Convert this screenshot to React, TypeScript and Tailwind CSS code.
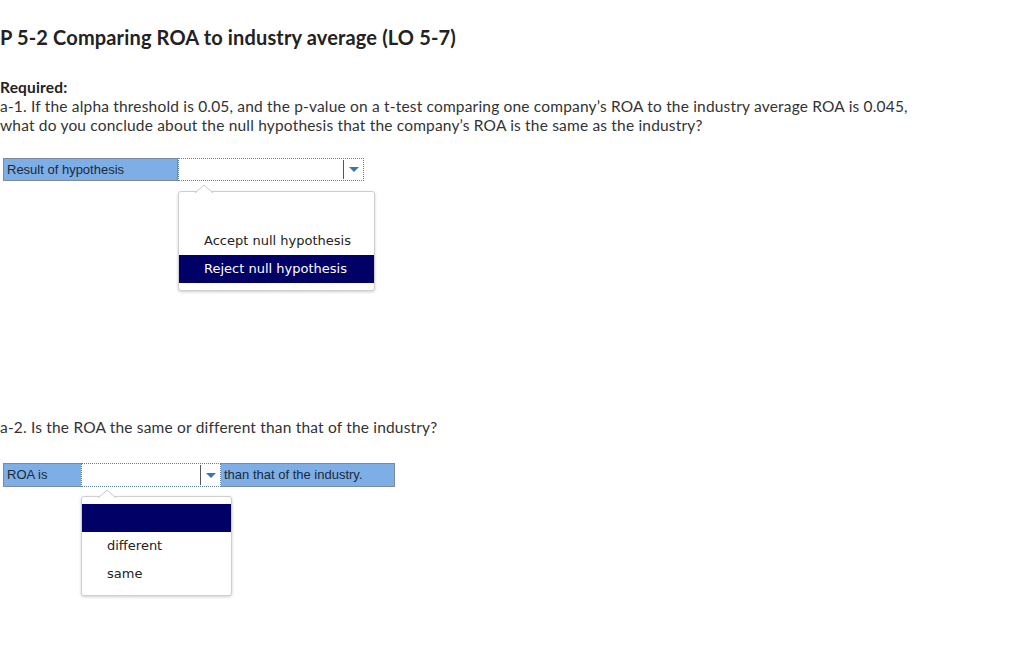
import React from "react";

const body = { fontFamily: "Lato, 'Open Sans', sans-serif" };
const label = { fontFamily: "'Liberation Sans', Arial, sans-serif" };

function Arrow() {
  return (
    <div className="my-[1px] flex w-[20px] items-center justify-center border-l border-[#555]">
      <svg width="10" height="5" viewBox="0 0 10 5">
        <polygon points="0,0 10,0 5,5" fill="#3d72b4" />
      </svg>
    </div>
  );
}

function Pointer() {
  return (
    <svg className="absolute left-[16px] top-[-7px]" width="18" height="8" viewBox="0 0 18 8">
      <polygon points="0,8 9,0 18,8" fill="#fff" />
      <polyline points="0,8 9,0 18,8" fill="none" stroke="#c8c8c8" strokeWidth="1" />
    </svg>
  );
}

function Menu({ items, selected, width }: { items: string[]; selected: number; width: string }) {
  return (
    <div
      className={`absolute left-[-1px] top-[32px] z-10 rounded-[3px] border border-[#cfcfcf] bg-white py-[7px] shadow-[0_1px_3px_rgba(0,0,0,0.2)] ${width}`}
      style={{ fontFamily: "'DejaVu Sans', Verdana, sans-serif" }}
    >
      <Pointer />
      {items.map((it, i) => (
        <div
          key={i}
          className={`flex h-[28px] items-center pl-[25px] text-[13px] ${
            i === selected ? "bg-[#000066] text-white" : "text-[#222]"
          }`}
        >
          {it}
        </div>
      ))}
    </div>
  );
}

export default function App() {
  return (
    <div className="min-h-[650px] w-[1019px] bg-white text-[#333]" style={body}>
      <h1 className="pt-[25px] text-[20px] font-bold leading-[24px] tracking-[0.15px] text-[#222]">
        P 5-2 Comparing ROA to industry average (LO 5-7)
      </h1>
      <div className="mt-[29px] text-[15.5px] leading-[19px] tracking-[0.18px]">
        <div className="font-bold text-[#222]">Required:</div>
        <div>
          a-1. If the alpha threshold is 0.05, and the p-value on a t-test comparing one company’s ROA to the industry average ROA is 0.045,
          <br />
          what do you conclude about the null hypothesis that the company’s ROA is the same as the industry?
        </div>
      </div>

      <div className="ml-[3px] mt-[23px] flex h-[23px] w-[361px]" style={label}>
        <div className="flex w-[175px] items-center border border-[#7d8a98] bg-[#7eaee6] pl-[3px] text-[13px] text-[#1a2a3a]">
          Result of hypothesis
        </div>
        <div className="relative flex flex-1 justify-end border border-dotted border-[#5f7f9f] bg-white">
          <Arrow />
          <Menu items={["", "Accept null hypothesis", "Reject null hypothesis"]} selected={2} width="w-[197px]" />
        </div>
      </div>

      <div className="mt-[237px] text-[15.5px] leading-[19px] tracking-[0.18px]">
        a-2. Is the ROA the same or different than that of the industry?
      </div>

      <div className="ml-[3px] mt-[26px] flex h-[24px] w-[392px]" style={label}>
        <div className="flex w-[78px] items-center border-y border-l border-[#7d8a98] bg-[#7eaee6] pl-[3px] text-[13px] text-[#1a2a3a]">
          ROA is
        </div>
        <div className="relative flex w-[140px] justify-end border border-dotted border-[#5f7f9f] bg-white">
          <Arrow />
          <Menu items={["", "different", "same"]} selected={0} width="w-[151px]" />
        </div>
        <div className="flex flex-1 items-center border-y border-r border-[#7d8a98] bg-[#7eaee6] pl-[3px] text-[13px] text-[#1a2a3a]">
          than that of the industry.
        </div>
      </div>
    </div>
  );
}
